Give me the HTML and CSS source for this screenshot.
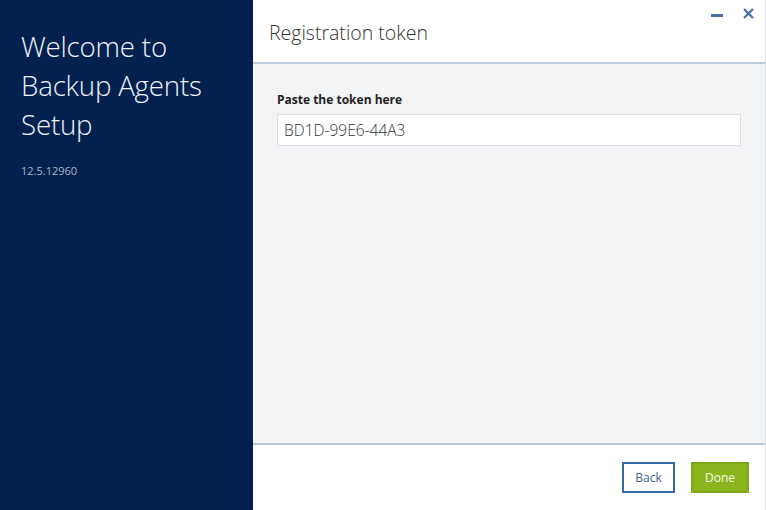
FILE: index.html
```html
<!DOCTYPE html>
<html lang="en">

<head>
    <meta charset="UTF-8">
    <title>Backup Agents Setup</title>
    <link rel="stylesheet" href="styles.css">
</head>

<body>
    <div class="window">
        <aside class="sidebar">
            <h1>Welcome to Backup Agents Setup</h1>
            <div class="version">12.5.12960</div>
        </aside>
        <main class="panel">
            <header class="panel-header">
                <h2>Registration token</h2>
                <div class="window-controls">
                    <span class="minimize"></span>
                    <svg class="close" width="11" height="11" viewBox="0 0 11 11">
                        <path d="M1 1 L10 10 M10 1 L1 10" stroke="#4a6ea8" stroke-width="2.2" />
                    </svg>
                </div>
            </header>
            <section class="panel-body">
                <label class="field-label" for="token">Paste the token here</label>
                <input type="text" id="token" value="BD1D-99E6-44A3">
            </section>
            <footer class="panel-footer">
                <button class="btn btn-back">Back</button>
                <button class="btn btn-done">Done</button>
            </footer>
        </main>
    </div>
</body>

</html>
```

FILE: styles.css
```css
html,
body {
    margin: 0;
    padding: 0;
    height: 100%;
}

body {
    font-family: "Open Sans", "Segoe UI", sans-serif;
    background-color: white;
}

.window {
    display: flex;
    width: 766px;
    height: 510px;
}

.sidebar {
    width: 253px;
    flex-shrink: 0;
    background-color: #03214f;
    padding: 27px 0 0 21px;
    box-sizing: border-box;
}

.sidebar h1 {
    margin: 0;
    width: 205px;
    font-size: 27.7px;
    font-weight: 300;
    line-height: 39px;
    color: #eef2f8;
    letter-spacing: -0.2px;
}

.version {
    margin-top: 19px;
    font-size: 11px;
    color: #a7b2c6;
}

.panel {
    flex: 1;
    display: flex;
    flex-direction: column;
    border-right: 1px solid #dde1e7;
}

.panel-header {
    height: 62px;
    flex-shrink: 0;
    display: flex;
    justify-content: space-between;
    border-bottom: 2px solid #bccadc;
    background-color: white;
}

.panel-header h2 {
    margin: 19px 0 0 16px;
    font-size: 19.5px;
    font-weight: 300;
    color: #333;
}

.window-controls {
    display: flex;
    align-items: flex-start;
    gap: 20px;
    padding: 8px 11px 0 0;
}

.minimize {
    display: block;
    width: 12px;
    height: 3px;
    margin-top: 6px;
    background-color: #4a6ea8;
}

.panel-body {
    flex: 1;
    background-color: #f3f4f6;
    padding: 27px 24px 0 24px;
    border-bottom: 2px solid #bcc5d3;
    display: flex;
    flex-direction: column;
}

.field-label {
    font-size: 12px;
    font-weight: bold;
    color: #222;
    margin-bottom: 6px;
}

input[type="text"] {
    height: 32px;
    padding: 0 6px;
    font-family: "Open Sans", sans-serif;
    font-size: 15.5px;
    font-weight: 300;
    color: #333;
    border: 1px solid #dadee4;
    background-color: white;
    box-sizing: border-box;
}

.panel-footer {
    height: 65px;
    flex-shrink: 0;
    display: flex;
    justify-content: flex-end;
    align-items: flex-start;
    gap: 16px;
    padding: 17px 16px 0 0;
    box-sizing: border-box;
    background-color: white;
}

.btn {
    height: 31px;
    font-family: "Open Sans", sans-serif;
    font-size: 12px;
    padding: 0;
    cursor: pointer;
}

.btn-back {
    width: 53px;
    background-color: white;
    color: #3d5f93;
    border: 2px solid #3566a6;
}

.btn-done {
    width: 58px;
    background-color: #8bb51c;
    color: #f4f9e6;
    border: 2px solid #7ea616;
}
```
